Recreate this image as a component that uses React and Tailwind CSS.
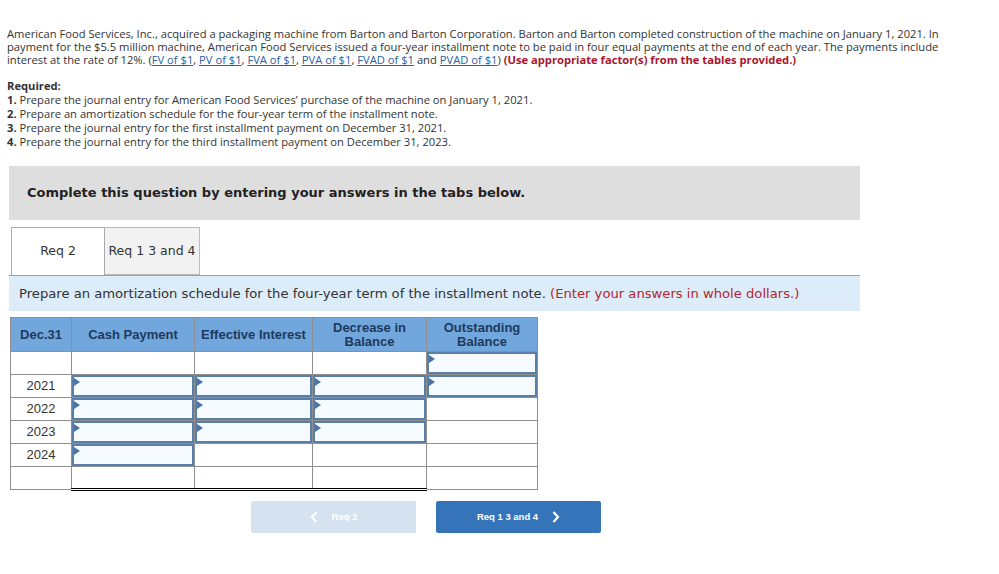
import React from 'react';

// which cells are entry fields: [cash, interest, decrease, outstanding]
const ROWS = [
  { label: '', inputs: [false, false, false, true] },
  { label: '2021', inputs: [true, true, true, true] },
  { label: '2022', inputs: [true, true, true, false] },
  { label: '2023', inputs: [true, true, true, false] },
  { label: '2024', inputs: [true, false, false, false] },
];

const LINKS = ['FV of $1', 'PV of $1', 'FVA of $1', 'PVA of $1', 'FVAD of $1'];

function EntryCell() {
  return (
    <div className="relative h-[22px] border-2 border-[#5b7ea6] bg-[#f5fbff]">
      <span className="absolute left-0 top-[1px] w-0 h-0 border-y-[4px] border-y-transparent border-l-[6px] border-l-[#4a74a8]" />
    </div>
  );
}

function Chevron({ dir }) {
  return (
    <svg width="8" height="12" viewBox="0 0 8 12" className="inline-block">
      <path
        d={dir === 'left' ? 'M6.5 1 L2 6 L6.5 11' : 'M1.5 1 L6 6 L1.5 11'}
        fill="none"
        stroke="currentColor"
        strokeWidth="2.2"
      />
    </svg>
  );
}

export default function App() {
  return (
    <div className="w-[999px] h-[574px] bg-white text-[#333]">
      {/* Problem statement */}
      <div className="pl-[7px] pt-[27px] font-['Open_Sans',sans-serif] text-[11.2px] leading-[13px] whitespace-nowrap">
        <p>
          American Food Services, Inc., acquired a packaging machine from Barton and Barton Corporation. Barton and
          Barton completed construction of the machine on January 1, 2021. In
          <br />
          payment for the $5.5 million machine, American Food Services issued a four-year installment note to be paid in
          four equal payments at the end of each year. The payments include
          <br />
          interest at the rate of 12%. (
          {LINKS.map((l, i) => (
            <React.Fragment key={l}>
              <span className="text-[#2c609f] underline">{l}</span>
              {i < LINKS.length - 1 ? ', ' : ''}
            </React.Fragment>
          ))}{' '}
          and <span className="text-[#2c609f] underline">PVAD of $1</span>){' '}
          <span className="font-bold text-[#a8162e]">(Use appropriate factor(s) from the tables provided.)</span>
        </p>

        <div className="mt-[13px] leading-[14px]">
          <p className="font-bold">Required:</p>
          <p><b>1.</b> Prepare the journal entry for American Food Services’ purchase of the machine on January 1, 2021.</p>
          <p><b>2.</b> Prepare an amortization schedule for the four-year term of the installment note.</p>
          <p><b>3.</b> Prepare the journal entry for the first installment payment on December 31, 2021.</p>
          <p><b>4.</b> Prepare the journal entry for the third installment payment on December 31, 2023.</p>
        </div>
      </div>

      {/* Answer area */}
      <div className="ml-[9px] w-[851px] mt-[17px] font-['DejaVu_Sans',sans-serif]">
        <div className="h-[54px] bg-[#dedede] flex items-center pl-[18px] text-[13px] font-bold text-[#222]">
          Complete this question by entering your answers in the tabs below.
        </div>

        {/* Tabs */}
        <div className="flex mt-[7px] pl-[2px] text-[12.5px] text-[#333]">
          <div className="w-[94px] h-[48px] bg-white border border-b-0 border-[#aaa] flex items-center justify-center">
            Req 2
          </div>
          <div className="w-[95px] h-[48px] bg-[#f2f2f2] border border-l-0 border-[#bbb] flex items-center justify-center">
            Req 1 3 and 4
          </div>
        </div>

        {/* Instruction band */}
        <div className="h-[36px] bg-[#dcecf9] border-t border-[#9aa3ad] flex items-center pl-[10px] text-[13.15px]">
          Prepare an amortization schedule for the four-year term of the installment note.&nbsp;
          <span className="text-[#b3272d]">(Enter your answers in whole dollars.)</span>
        </div>
      </div>

      {/* Amortization table */}
      <table className="ml-[10px] mt-[6px] border-collapse table-fixed font-['Liberation_Sans',sans-serif] text-[13px]">
        <colgroup>
          <col className="w-[61px]" />
          <col className="w-[123px]" />
          <col className="w-[118px]" />
          <col className="w-[114px]" />
          <col className="w-[111px]" />
        </colgroup>
        <thead>
          <tr className="h-[34px] bg-[#72a7dd] text-[#1d3a5c] font-bold">
            <th className="border border-[#8f8f8f] font-bold">Dec.31</th>
            <th className="border border-[#8f8f8f] font-bold">Cash Payment</th>
            <th className="border border-[#8f8f8f] font-bold">Effective Interest</th>
            <th className="border border-[#8f8f8f] font-bold leading-[14px]">Decrease in<br />Balance</th>
            <th className="border border-[#8f8f8f] font-bold leading-[14px]">Outstanding<br />Balance</th>
          </tr>
        </thead>
        <tbody>
          {ROWS.map((row, ri) => (
            <tr key={ri} className="h-[23px]">
              <td className="border border-[#8f8f8f] text-center text-[#333] leading-[22px]">{row.label}</td>
              {row.inputs.map((isInput, ci) => {
                const underline =
                  ri === 4 && (ci === 1 || ci === 2) ? 'border-b-black' : '';
                return (
                  <td key={ci} className={`border border-[#8f8f8f] p-0 ${underline}`}>
                    {isInput ? <EntryCell /> : null}
                  </td>
                );
              })}
            </tr>
          ))}
          <tr className="h-[23px]">
            <td className="border border-[#8f8f8f]" />
            <td className="border border-[#8f8f8f] border-b-[3px] border-b-black border-double" />
            <td className="border border-[#8f8f8f] border-b-[3px] border-b-black border-double" />
            <td className="border border-[#8f8f8f] border-b-[3px] border-b-black border-double" />
            <td className="border border-[#8f8f8f]" />
          </tr>
        </tbody>
      </table>

      {/* Navigation */}
      <div className="flex gap-[20px] ml-[251px] mt-[10px] font-['Liberation_Sans',sans-serif] text-[9.5px] font-bold text-white">
        <button className="w-[165px] h-[32px] rounded-[2px] bg-[#d5e2ef] flex items-center justify-center gap-[14px]">
          <Chevron dir="left" />
          <span>Req 2</span>
        </button>
        <button className="w-[165px] h-[32px] rounded-[2px] bg-[#3674b9] flex items-center justify-center gap-[14px]">
          <span>Req 1 3 and 4</span>
          <Chevron dir="right" />
        </button>
      </div>
    </div>
  );
}
